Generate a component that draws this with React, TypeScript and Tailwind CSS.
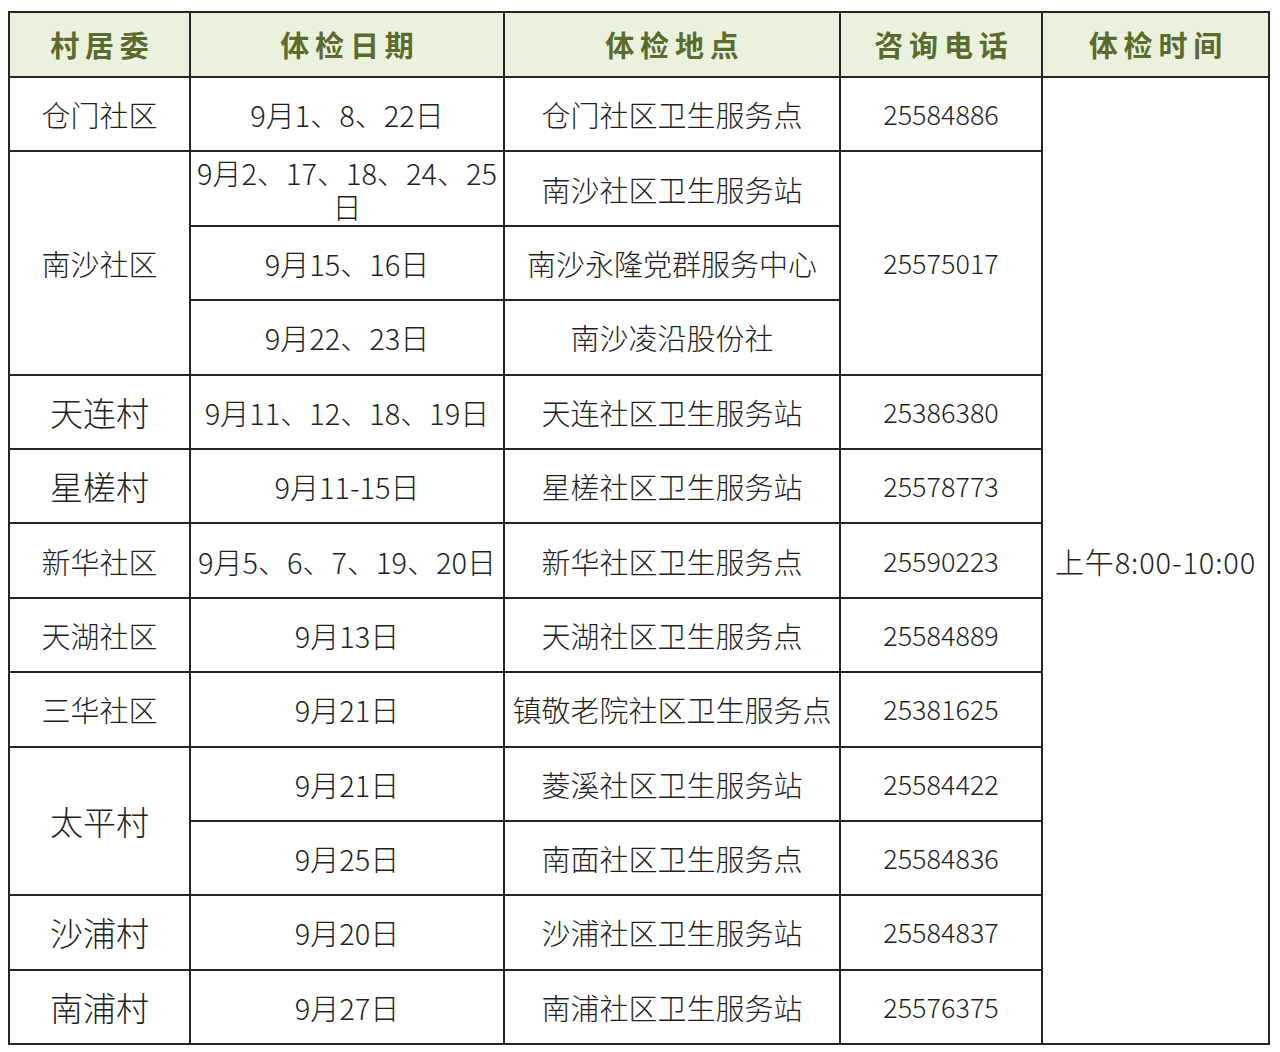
const HEADERS = ['村居委', '体检日期', '体检地点', '咨询电话', '体检时间'];

type Row = {
  village?: { name: string; span: number };
  date: string;
  place: string;
  phone?: { value: string; span: number };
};

const ROWS: Row[] = [
  { village: { name: '仓门社区', span: 1 }, date: '9月1、8、22日', place: '仓门社区卫生服务点', phone: { value: '25584886', span: 1 } },
  { village: { name: '南沙社区', span: 3 }, date: '9月2、17、18、24、25日', place: '南沙社区卫生服务站', phone: { value: '25575017', span: 3 } },
  { date: '9月15、16日', place: '南沙永隆党群服务中心' },
  { date: '9月22、23日', place: '南沙凌沿股份社' },
  { village: { name: '天连村', span: 1 }, date: '9月11、12、18、19日', place: '天连社区卫生服务站', phone: { value: '25386380', span: 1 } },
  { village: { name: '星槎村', span: 1 }, date: '9月11-15日', place: '星槎社区卫生服务站', phone: { value: '25578773', span: 1 } },
  { village: { name: '新华社区', span: 1 }, date: '9月5、6、7、19、20日', place: '新华社区卫生服务点', phone: { value: '25590223', span: 1 } },
  { village: { name: '天湖社区', span: 1 }, date: '9月13日', place: '天湖社区卫生服务点', phone: { value: '25584889', span: 1 } },
  { village: { name: '三华社区', span: 1 }, date: '9月21日', place: '镇敬老院社区卫生服务点', phone: { value: '25381625', span: 1 } },
  { village: { name: '太平村', span: 2 }, date: '9月21日', place: '菱溪社区卫生服务站', phone: { value: '25584422', span: 1 } },
  { date: '9月25日', place: '南面社区卫生服务点', phone: { value: '25584836', span: 1 } },
  { village: { name: '沙浦村', span: 1 }, date: '9月20日', place: '沙浦社区卫生服务站', phone: { value: '25584837', span: 1 } },
  { village: { name: '南浦村', span: 1 }, date: '9月27日', place: '南浦社区卫生服务站', phone: { value: '25576375', span: 1 } },
];

const cell = 'border-2 border-[#262626] text-center align-middle px-1';

export default function App(): JSX.Element {
  return (
    <div
      className="min-h-[1052px] bg-white pl-[8px] pt-[11px] text-[#1f1f1f]"
      style={{ fontFamily: '"Noto Sans CJK SC", "Noto Sans", sans-serif' }}
    >
      <table className="w-[1261px] table-fixed border-collapse border-2 border-[#262626]">
        <colgroup>
          <col className="w-[181px]" />
          <col className="w-[314px]" />
          <col className="w-[336px]" />
          <col className="w-[202px]" />
          <col className="w-[227px]" />
        </colgroup>
        <thead>
          <tr className="h-[65px] bg-[#eaf1dd]">
            {HEADERS.map((title) => (
              <th key={title} className={`${cell} text-[29px] font-bold tracking-[0.2em] text-[#5a6b2e]`}>
                <span className="-mr-[0.2em]">{title}</span>
              </th>
            ))}
          </tr>
        </thead>
        <tbody className="text-[29px] font-light leading-[34px]">
          {ROWS.map((row, index) => (
            <tr key={index} className="h-[74.4px]">
              {row.village ? (
                <td
                  rowSpan={row.village.span}
                  className={`${cell} ${row.village.name.length === 3 ? 'text-[33px]' : ''}`}
                >
                  {row.village.name}
                </td>
              ) : null}
              <td className={cell}>{row.date}</td>
              <td className={`${cell} whitespace-nowrap`}>{row.place}</td>
              {row.phone ? (
                <td rowSpan={row.phone.span} className={`${cell} text-[27px]`}>
                  {row.phone.value}
                </td>
              ) : null}
              {index === 0 ? (
                <td rowSpan={ROWS.length} className={`${cell} whitespace-nowrap tracking-[0.03em]`}>
                  上午8:00-10:00
                </td>
              ) : null}
            </tr>
          ))}
        </tbody>
      </table>
    </div>
  );
}
